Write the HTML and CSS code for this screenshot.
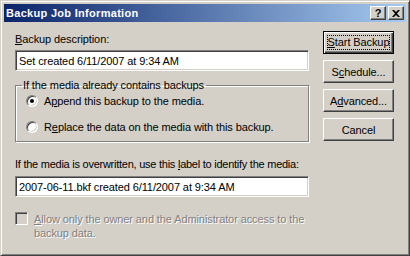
FILE: index.html
```html
<!DOCTYPE html>
<html lang="en">
<head>
  <meta charset="UTF-8">
  <title>Backup Job Information</title>
  <link rel="stylesheet" href="styles.css">
</head>
<body>
  <div class="window">
    <div class="titlebar">
      <span class="title">Backup Job Information</span>
      <div class="caption-btns">
        <span class="cap-btn">?</span>
        <span class="cap-btn close">
          <svg width="8" height="7" viewBox="0 0 8 7"><path d="M0 0h2l2 2 2-2h2L5 3.5 8 7H6L4 5 2 7H0l3-3.5z" fill="#000"/></svg>
        </span>
      </div>
    </div>

    <div class="content">
      <div class="main">
        <label class="label"><u>B</u>ackup description:</label>
        <div class="edit">Set created 6/11/2007 at 9:34 AM</div>

        <fieldset class="group">
          <legend>If the media already contains backups</legend>
          <div class="radio-row">
            <span class="radio checked"></span>
            <span>A<u>p</u>pend this backup to the media.</span>
          </div>
          <div class="radio-row">
            <span class="radio"></span>
            <span>R<u>e</u>place the data on the media with this backup.</span>
          </div>
        </fieldset>

        <label class="label second">If the media is overwritten, use this <u>l</u>abel to identify the media:</label>
        <div class="edit second">2007-06-11.bkf created 6/11/2007 at 9:34 AM</div>

        <div class="check-row disabled">
          <span class="checkbox"></span>
          <span class="check-text"><u>A</u>llow only the owner and the Administrator access to the<br>backup data.</span>
        </div>
      </div>

      <div class="side">
        <div class="btn default"><span class="focus"><u>S</u>tart Backup</span></div>
        <div class="btn">S<u>c</u>hedule...</div>
        <div class="btn">A<u>d</u>vanced...</div>
        <div class="btn">Cancel</div>
      </div>
    </div>
  </div>
</body>
</html>
```

FILE: styles.css
```css
body {
  margin: 0;
  font-family: "Liberation Sans", Arial, sans-serif;
  font-size: 11px;
  letter-spacing: -0.1px;
  color: #000;
  background: #d4d0c8;
}

.window {
  width: 410px;
  height: 256px;
  box-sizing: border-box;
  background: #d4d0c8;
  border: 1px solid;
  border-color: #d4d0c8 #404040 #404040 #d4d0c8;
  box-shadow: inset 1px 1px #fff, inset -1px -1px #808080;
  padding: 3px;
}

.titlebar {
  height: 18px;
  background: linear-gradient(to right, #0a246a, #a6caf0);
  display: flex;
  align-items: center;
  justify-content: space-between;
  padding: 0 2px 0 2px;
}

.title {
  color: #fff;
  font-family: "Liberation Sans", Arial, sans-serif;
  font-weight: bold;
  font-size: 11px;
  letter-spacing: 0.3px;
}

.caption-btns {
  display: flex;
  gap: 2px;
}

.cap-btn {
  width: 16px;
  height: 14px;
  box-sizing: border-box;
  background: #d4d0c8;
  border: 1px solid;
  border-color: #fff #404040 #404040 #fff;
  box-shadow: inset -1px -1px #808080;
  display: flex;
  align-items: center;
  justify-content: center;
  font-weight: bold;
  font-size: 11px;
}

.content {
  display: flex;
  padding: 11px 0 0 11px;
}

.main {
  width: 294px;
  display: flex;
  flex-direction: column;
}

.label {
  line-height: 13px;
}

.label.second {
  margin-top: 16px;
  white-space: nowrap;
  letter-spacing: -0.25px;
}

.edit {
  margin-top: 4px;
  height: 21px;
  box-sizing: border-box;
  background: #fff;
  border: 1px solid;
  border-color: #808080 #fff #fff #808080;
  box-shadow: inset 1px 1px #404040, inset -1px -1px #d4d0c8;
  padding: 3px 3px 0;
  line-height: 14px;
  white-space: nowrap;
}

.edit.second {
  margin-top: 5px;
}

.group {
  margin: 8px 0 0;
  padding: 0 0 8px 10px;
  border: 1px solid #808080;
  box-shadow: 1px 1px #fff, inset 1px 1px #fff;
}

.group legend {
  padding: 0 2px 0 1px;
  margin-left: -4px;
  line-height: 13px;
}

.radio-row {
  display: flex;
  align-items: center;
  gap: 6px;
  height: 13px;
  margin-top: 2px;
}

.radio-row + .radio-row {
  margin-top: 13px;
}

.radio {
  width: 12px;
  height: 12px;
  box-sizing: border-box;
  border-radius: 50%;
  background: #fff;
  border: 1px solid;
  border-color: #808080 #fff #fff #808080;
  box-shadow: inset 1px 1px #404040, inset -1px -1px #d4d0c8;
  display: flex;
  align-items: center;
  justify-content: center;
}

.radio.checked::after {
  content: "";
  width: 4px;
  height: 4px;
  border-radius: 50%;
  background: #000;
}

.check-row {
  display: flex;
  align-items: flex-start;
  gap: 6px;
  margin-top: 15px;
}

.checkbox {
  width: 13px;
  height: 13px;
  flex: none;
  box-sizing: border-box;
  background: #d4d0c8;
  border: 1px solid;
  border-color: #808080 #fff #fff #808080;
  box-shadow: inset 1px 1px #404040, inset -1px -1px #d4d0c8;
}

.check-text {
  line-height: 14px;
  white-space: nowrap;
}

.disabled .check-text {
  color: #808080;
  text-shadow: 1px 1px #fff;
}

.side {
  margin-left: 14px;
  margin-top: -2px;
  display: flex;
  flex-direction: column;
  gap: 6px;
}

.btn {
  width: 71px;
  height: 23px;
  box-sizing: border-box;
  border: 1px solid;
  border-color: #fff #404040 #404040 #fff;
  box-shadow: inset -1px -1px #808080;
  display: flex;
  align-items: center;
  justify-content: center;
  white-space: nowrap;
}

.btn.default {
  border: 1px solid #000;
  box-shadow: inset 1px 1px #fff, inset -1px -1px #404040, inset -2px -2px #808080;
  padding: 3px;
}

.focus {
  flex: 1;
  align-self: stretch;
  display: block;
  text-align: center;
  line-height: 13px;
  border: 1px dotted #000;
}
```
